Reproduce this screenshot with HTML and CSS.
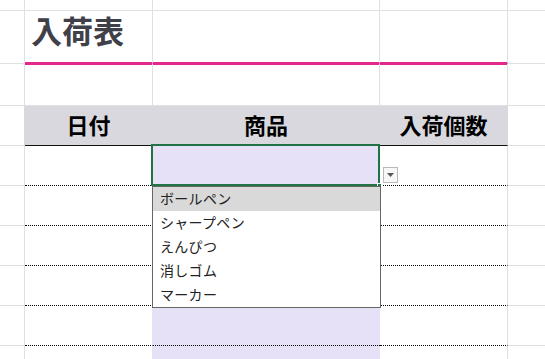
FILE: index.html
```html
<!DOCTYPE html>
<html lang="ja">
<head>
<meta charset="utf-8">
<link rel="stylesheet" href="styles.css">
</head>
<body>
<div class="sheet">
  <div class="row r1">
    <div class="c"></div><div class="c"></div><div class="c"></div><div class="c"></div><div class="c"></div>
  </div>
  <div class="row r2">
    <div class="c"></div>
    <div class="c t"><span class="title">入荷表</span></div>
    <div class="c t"></div>
    <div class="c t"></div>
    <div class="c"></div>
  </div>
  <div class="row r3">
    <div class="c"></div><div class="c"></div><div class="c"></div><div class="c"></div><div class="c"></div>
  </div>
  <div class="row head">
    <div class="c ha"></div>
    <div class="c h">日付</div>
    <div class="c h">商品</div>
    <div class="c h">入荷個数</div>
    <div class="c"></div>
  </div>
  <div class="row body">
    <div class="c"></div>
    <div class="c bb"></div>
    <div class="c bc sel">
      <div class="frame"></div>
      <div class="handle"></div>
      <div class="dd-btn"><svg width="7" height="4" viewBox="0 0 7 4"><polygon points="0,0 7,0 3.5,4" fill="#555"/></svg></div>
      <ul class="list">
        <li class="on">ボールペン</li>
        <li>シャープペン</li>
        <li>えんぴつ</li>
        <li>消しゴム</li>
        <li>マーカー</li>
      </ul>
    </div>
    <div class="c bd"></div>
    <div class="c"></div>
  </div>
  <div class="row body">
    <div class="c"></div><div class="c bb"></div><div class="c bc"></div><div class="c bd"></div><div class="c"></div>
  </div>
  <div class="row body">
    <div class="c"></div><div class="c bb"></div><div class="c bc"></div><div class="c bd"></div><div class="c"></div>
  </div>
  <div class="row body">
    <div class="c"></div><div class="c bb"></div><div class="c bc"></div><div class="c bd"></div><div class="c"></div>
  </div>
  <div class="row body">
    <div class="c"></div><div class="c bb"></div><div class="c bc"></div><div class="c bd"></div><div class="c"></div>
  </div>
  <div class="row body tail">
    <div class="c"></div><div class="c bb"></div><div class="c bc"></div><div class="c bd"></div><div class="c"></div>
  </div>
</div>
</body>
</html>
```
FILE: styles.css
```css
html, body {
  margin: 0;
  padding: 0;
  background: #fff;
}
body {
  width: 545px;
  height: 359px;
  overflow: hidden;
  font-family: "Noto Sans CJK JP", "Noto Sans", sans-serif;
}
.sheet {
  display: flex;
  flex-direction: column;
}
.row {
  display: grid;
  grid-template-columns: 25px 128px 227px 128px 1fr;
}
.c {
  box-sizing: border-box;
  border-right: 1px solid #e0e0e0;
  border-bottom: 1px solid #e0e0e0;
}
.c:last-child {
  border-right: 0;
}
.r1 { height: 11px; }
.r2 { height: 53px; }
.r2 .t {
  border-bottom: 3px solid #e3278b;
  margin-bottom: -1px;
}
.title {
  display: block;
  white-space: nowrap;
  padding: 4px 0 0 6px;
  font-size: 31px;
  line-height: 30px;
  font-weight: 700;
  color: #404049;
}
.r3 { height: 42px; }
.head { height: 40px; }
.head .ha { border-right-color: #d9d8de; }
.h {
  background: #d9d8de;
  border-right-color: #d9d8de;
  border-bottom: 1px solid #111;
  display: flex;
  align-items: center;
  justify-content: center;
  padding-bottom: 4px;
  font-size: 22px;
  font-weight: 700;
  color: #000;
}
.body { height: 40px; }
.body.tail { height: 13px; }
.tail .c { border-bottom: 0; }
.bb {
  border-right: 1px solid #e6e1f7;
  border-bottom: 1px dotted #000;
}
.bc {
  border-right: 0;
  background: #e6e1f7;
  border-bottom: 1px dotted #000;
}
.bd {
  border-bottom: 1px dotted #000;
}
.sel {
  position: relative;
}
.frame {
  position: absolute;
  left: -2px;
  top: -2px;
  right: 0;
  bottom: -1px;
  border: 2px solid #217346;
}
.handle {
  position: absolute;
  right: -2px;
  bottom: -3px;
  width: 3px;
  height: 3px;
  background: #217346;
  border: 1px solid #fff;
}
.dd-btn {
  position: absolute;
  left: calc(100% + 3px);
  top: 21px;
  width: 15px;
  height: 16px;
  box-sizing: border-box;
  border: 1px solid #b9b9b9;
  background: #f7f7f7;
  display: flex;
  align-items: center;
  justify-content: center;
}
.dd-btn svg { display: block; }
.list {
  position: absolute;
  z-index: 10;
  left: -1px;
  top: 40px;
  width: 229px;
  box-sizing: border-box;
  margin: 0;
  padding: 0;
  list-style: none;
  background: #fff;
  border: 1px solid #666;
}
.list li {
  height: 24px;
  line-height: 23px;
  padding-left: 7px;
  font-size: 14px;
  letter-spacing: 0.3px;
  color: #222;
}
.list li.on {
  background: #d9d9d9;
}
```
